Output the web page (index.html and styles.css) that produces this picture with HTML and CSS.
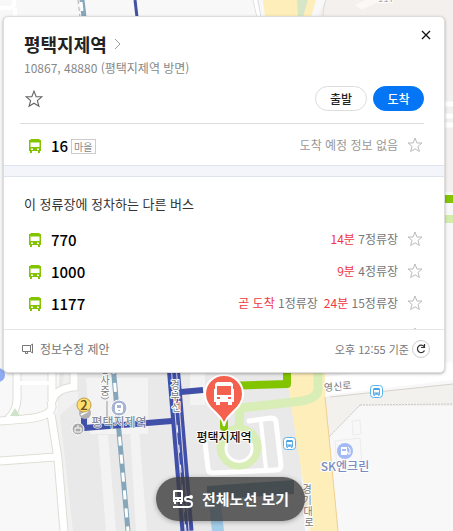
FILE: index.html
```html
<!DOCTYPE html>
<html lang="ko">
<head>
  <meta charset="UTF-8">
  <meta name="viewport" content="width=device-width, initial-scale=1.0">
  <title>평택지제역</title>
  <link rel="stylesheet" href="styles.css">
</head>
<body>
  <svg width="0" height="0" class="symbols" aria-hidden="true">
    <symbol id="star" viewBox="0 0 16 16">
      <path d="M8 1l1.900 5h5.100l-4 3.400 1.400 5.100L8 11.800l-4.400 2.700L5 9.400 1 6h5.100z" fill="none" stroke="currentColor" stroke-linejoin="miter"/>
    </symbol>
    <symbol id="bus" viewBox="0 0 12 14">
      <path fill="currentColor" fill-rule="evenodd" d="M2 0h8l1 1h1v11h-1v2H9v-2H3v2H1v-2H0V1h1zM1.500 3.500V8h9V3.500zM2 9.500V11h2V9.500zM8 9.500V11h2V9.500z"/>
    </symbol>
  </svg>

  <div class="map">
    <svg class="map-canvas" viewBox="0 0 453 531" preserveAspectRatio="xMidYMid slice">
      <rect width="453" height="531" fill="#f8f8f8"/>
      <!-- blocks -->
      <path d="M325 0h128v192h-13V17H318z" fill="#f3f0ed"/>
      <path d="M60 365h235l10 166H67L55 450z" fill="#e9e9e9"/>
      <path d="M66 365h14l-2 35-18 15 13 116h-8L53 430z" fill="#f1f1f1"/>
      <path d="M86 378h62v56H90zM98 435h10l8 96h-10zM130 430h9l8 101h-11zM190 365h15v40h-15z" fill="#f3f3f3"/>
      <path d="M325 397l128-13v22h-93l-31 31z" fill="#f2f1ee"/>
      <path d="M360 405l93-1M360 405l-31 32" fill="none" stroke="#c8c8c8" stroke-dasharray="2 1"/>
      <path d="M352 421l8-1 1 14-8 1zM335 441l25-3 2 28-25 2z" fill="#f8f8f8" stroke="#ececec"/>

      <!-- main road -->
      <path d="M291 365h34v32l4 40 9 94h-28l-7-50-15-95z" fill="#feeeba"/>
      <path d="M325 397l4 40 9 94" fill="none" stroke="#f0cf90"/>
      <path d="M263 0h53l-5 17h-46z" fill="#feeeba"/>
      <path d="M297 0h11l-5 17h-5z" fill="#d8e6c8"/>
      <path d="M326 0c-2 5-3 11-3 17M253 0l4 17M258 0l3 17" fill="none" stroke="#dcdcdc"/>
      <path d="M255 0l4 17" stroke="#fff" stroke-width="3"/>
      <path d="M355 5l18-9 12 2-23 12z" fill="#faf9f5"/>
      <text x="386" y="2" class="label-minor" text-anchor="middle">117</text>

      <!-- side roads -->
      <g fill="none">
        <path d="M0 421c30-2 50-3 52-14l-1-6M17 365v35q-1 12-9 19M52 365v35M0 461l55-4M51 414l7 45 6 72M52 402q2-13 22-15V365" stroke="#deded6" stroke-width="9"/>
        <path d="M0 421c30-2 50-3 52-14l-1-6M17 365v35q-1 12-9 19M52 365v35M0 461l55-4M51 414l7 45 6 72M52 402q2-13 22-15V365" stroke="#fff" stroke-width="7"/>
        <path d="M17 383h35M0 8h8q8 0 6-8M15 8v9" stroke="#fff" stroke-width="4"/>
        <path d="M326 386l127-15" stroke="#fff" stroke-width="18"/>
        <path d="M330 397l123-13" stroke="#d6d2ca"/>
        <path d="M443 104h10M443 116h10M443 125h10" stroke="#fff" stroke-width="5"/>
      </g>
      <path d="M15 408l5 8H10z" fill="#cfe3c8"/>

      <!-- station plaza -->
      <g fill="none" stroke-linejoin="round" stroke-linecap="round">
        <path d="M249 421l22-3q5 0 5 4l5 43q0 5-5 5l-63 3q-5 0-5-5l-4-33" stroke="#fff" stroke-width="5"/>
        <path d="M261 422l5 47" stroke="#fff" stroke-width="4"/>
        <path d="M239 428l1-20 62-7q16-3 16-12v-23" stroke="#d9edb7" stroke-width="9" stroke-linecap="butt"/>
        <circle cx="239" cy="447" r="18" stroke="#d9edb7" stroke-width="9"/>
        <path d="M230 439a13 13 0 1 0 18 0" stroke="#fff" stroke-width="3"/>
        <path d="M224 427v-41l63-2v-19" stroke="#82c400" stroke-width="8"/>
      </g>
      <path d="M207 486l87-6v14l-87 6z" fill="#6f93a4"/>
      <path d="M208 496h12l4 35h-12z" fill="#a2cce8"/>

      <!-- railway -->
      <g fill="none">
        <path d="M113 365l15 166" stroke="#86a6ba" stroke-width="5"/>
        <path d="M113 365l15 166" stroke="#fff" stroke-width="3" stroke-dasharray="9 9"/>
        <path d="M82 0l2 17" stroke="#86a6ba" stroke-width="5"/>
        <path d="M81 2l1 9" stroke="#fff" stroke-width="3"/>
        <path d="M78 0l2 17" stroke="#b0b0b0" stroke-dasharray="4 3"/>
        <path d="M135 0l2 17" stroke="#4252a5" stroke-width="3"/>
        <path d="M173 365l14 166" stroke="#4050a8" stroke-width="13"/>
        <path d="M171 365l14 166M176 365l13 166" stroke="#d8d8e4"/>
        <path d="M172 365l14 166" stroke="#fff" stroke-dasharray="8 12"/>
        <path d="M172 421l-88 7v-16M181 392l22-2" stroke="#4050a8" stroke-width="6"/>
      </g>
      <path d="M443 199h10" stroke="#82c400" stroke-width="8"/>
      <path d="M443 219h10" stroke="#d2edaa" stroke-width="8"/>

      <!-- pins and labels -->
      <circle cx="-2" cy="375" r="7" fill="#8daaf3"/>
      <circle cx="85" cy="413" r="6" fill="#b2b2b2"/>
      <path d="M81 415l7-4" stroke="#fff" stroke-width="2"/>
      <circle cx="78" cy="429" r="6" fill="#aaa" stroke="#fff"/>
      <path d="M75 428h6v4h-6zM78 425v3" fill="none" stroke="#fff"/>
      <circle cx="84" cy="405" r="7" fill="#ffdf6c" stroke="#bc9c52"/>
      <text x="84" y="410" class="label-exit" text-anchor="middle">2</text>
      <circle cx="119" cy="408" r="8" fill="#a8b5d2" stroke="#fff"/>
      <path fill="#fff" fill-rule="evenodd" d="M117 403h4l2 2v6l-1 2h-6l-1-2v-6zM117 405v3h4v-3zM118 410v1h2v-1z"/>
      <text x="119" y="427" class="label-station" text-anchor="middle">평택지제역</text>
      <g class="label-road" text-anchor="middle">
        <text x="105" y="373">공</text>
        <text x="105" y="384">사</text>
        <text x="105" y="395">중</text>
        <path d="M101 397q4 4 8 0M107 401v16" fill="none" stroke="#999"/>
        <text x="175" y="389">경</text>
        <text x="175" y="400">부</text>
        <text x="176" y="411">선</text>
        <text x="307" y="493">경</text>
        <text x="307" y="504">기</text>
        <text x="308" y="515">대</text>
        <text x="309" y="526">로</text>
        <text x="338" y="390" transform="rotate(-5 338 390)">영신로</text>
      </g>
      <g fill="#fff" stroke="#58b4ee">
        <rect x="370.500" y="385.500" width="12" height="12" rx="3"/>
        <rect x="283.500" y="437.500" width="12" height="12" rx="3"/>
      </g>
      <use href="#bus" x="373" y="388" width="7" height="8" color="#4ba4e4"/>
      <use href="#bus" x="286" y="440" width="7" height="8" color="#4ba4e4"/>
      <circle cx="345" cy="451" r="8" fill="#a3baf5"/>
      <path fill="#fff" fill-rule="evenodd" d="M341 447h6v8h-6zM342 449v2h4v-2z"/>
      <path d="M347 452h1v2h2v-5l-2-2" fill="none" stroke="#fff"/>
      <text x="345" y="471" class="label-place" text-anchor="middle">SK엔크린</text>

      <!-- selected stop -->
      <path d="M224 426c-1-6-4-9-9-14-6-5-10-11-10-18a19 19 0 0 1 38 0c0 7-4 13-10 18-5 5-8 8-9 14z" fill="#f4624f" stroke="#fff" stroke-width="2"/>
      <path fill="#fff" fill-rule="evenodd" d="M217 382h14l2 2v5h1v13h-2v3h-4v-3h-8v3h-4v-3h-2v-13h1v-5zM217 386v9h14v-9zM217 397v2h3v-2zM228 397v2h3v-2z"/>
      <text x="224" y="442" class="label-selected" text-anchor="middle">평택지제역</text>
    </svg>
  </div>

  <main class="card">
    <button class="close" aria-label="닫기">
      <svg width="10" height="10" viewBox="0 0 10 10"><path d="M1 1l8 8M9 1L1 9" fill="none" stroke="#111" stroke-width="1.300"/></svg>
    </button>

    <header class="stop">
      <h1><a href="#">평택지제역<svg width="7" height="12" viewBox="0 0 7 12"><path d="M1 1l5 5-5 5" fill="none" stroke="#999"/></svg></a></h1>
      <p class="stop-info">10867, 48880 (평택지제역 방면)</p>
      <div class="actions">
        <button class="fav fav-stop" aria-label="정류장 즐겨찾기"><svg width="18" height="18"><use href="#star"/></svg></button>
        <button class="pill">출발</button>
        <button class="pill pill-primary">도착</button>
      </div>
    </header>

    <ul class="buses buses-local">
      <li class="bus">
        <svg class="bus-icon" width="12" height="14"><use href="#bus"/></svg>
        <a href="#" class="bus-number">16</a>
        <span class="tag">마을</span>
        <span class="arrival none">도착 예정 정보 없음</span>
        <button class="fav" aria-label="16 즐겨찾기"><svg width="16" height="16"><use href="#star"/></svg></button>
      </li>
    </ul>

    <section class="others">
      <h2>이 정류장에 정차하는 다른 버스</h2>
      <ul class="buses buses-scroll">
        <li class="bus">
          <svg class="bus-icon" width="12" height="14"><use href="#bus"/></svg>
          <a href="#" class="bus-number">770</a>
          <span class="arrival"><em>14분</em> 7정류장</span>
          <button class="fav" aria-label="770 즐겨찾기"><svg width="16" height="16"><use href="#star"/></svg></button>
        </li>
        <li class="bus">
          <svg class="bus-icon" width="12" height="14"><use href="#bus"/></svg>
          <a href="#" class="bus-number">1000</a>
          <span class="arrival"><em>9분</em> 4정류장</span>
          <button class="fav" aria-label="1000 즐겨찾기"><svg width="16" height="16"><use href="#star"/></svg></button>
        </li>
        <li class="bus">
          <svg class="bus-icon" width="12" height="14"><use href="#bus"/></svg>
          <a href="#" class="bus-number">1177</a>
          <span class="arrival"><em>곧 도착</em> 1정류장</span>
          <span class="arrival arrival-next"><em>24분</em> 15정류장</span>
          <button class="fav" aria-label="1177 즐겨찾기"><svg width="16" height="16"><use href="#star"/></svg></button>
        </li>
        <li class="bus">
          <span class="arrival"></span>
          <button class="fav" aria-label="즐겨찾기"><svg width="16" height="16"><use href="#star"/></svg></button>
        </li>
      </ul>
    </section>

    <footer class="card-footer">
      <a href="#" class="suggest">
        <svg width="12" height="12" viewBox="0 0 12 12"><path d="M8.500 2.500h-8v6h8zM3.500 8.500v2h2v-2M8.500 2.500l2-1.500v9l-2-1.500" fill="none" stroke="#777"/></svg>
        정보수정 제안
      </a>
      <span class="time">오후 12:55 기준</span>
      <button class="refresh" aria-label="새로고침">
        <svg width="10" height="10" viewBox="0 0 10 10"><path d="M8.500 6.500A3.700 3.700 0 1 1 8 2.500M8.500 0v3.500H5" fill="none" stroke="#333" stroke-width="1.200"/></svg>
      </button>
    </footer>
  </main>

  <button class="all-routes">
    <svg width="22" height="20" viewBox="0 0 22 20">
      <path fill="#fff" fill-rule="evenodd" d="M2 1h8l1 1v11h-1v2H8v-2H4v2H2v-2H1V2zM3 3v5h6V3zM3 10v1h2v-1zM7 10v1h2v-1z"/>
      <path d="M1 18h15q4 0 4-3t-4-3q-3 0-3-2t3-2h3" fill="none" stroke="#fff" stroke-width="2"/>
      <circle cx="19" cy="8" r="2" fill="#fff"/>
    </svg>
    전체노선 보기
  </button>
</body>
</html>
```
FILE: styles.css
```css
* {
  box-sizing: border-box;
}

body {
  margin: 0;
  padding: 16px 8px 0 3px;
  min-height: 100vh;
  position: relative;
  overflow: hidden;
  font-family: "Noto Sans CJK KR", sans-serif;
  font-size: 12px;
  line-height: 20px;
  color: #222;
}

h1, h2, p, ul {
  margin: 0;
  padding: 0;
}

ul {
  list-style: none;
}

a {
  color: inherit;
  text-decoration: none;
}

em {
  font-style: normal;
  color: #f03742;
}

button {
  font: inherit;
  color: inherit;
  padding: 0;
  border: 0;
  background: none;
  cursor: pointer;
}

button svg {
  display: block;
}

.symbols {
  position: absolute;
}

/* map */
.map {
  position: absolute;
  inset: 0;
}

.map-canvas {
  display: block;
  width: 100%;
  height: 100%;
}

.map text {
  paint-order: stroke;
  stroke: #fff;
  stroke-width: 2px;
  stroke-linejoin: round;
}

.label-minor { font-size: 10px; fill: #aaa; }
.label-exit { font-size: 13px; font-weight: 500; fill: #665020; }
.map .label-exit { stroke: none; }
.map .label-station { font-size: 12px; font-weight: 500; fill: #858da0; stroke-width: 1px; }
.label-road { font-size: 10px; fill: #777; }
.label-place { font-size: 12px; font-weight: 500; fill: #7a8cc0; }
.label-selected { font-size: 12px; font-weight: 500; fill: #111; }

/* card */
.card {
  position: relative;
  background: #fff;
  border: 1px solid #ddd;
  border-radius: 5px;
  box-shadow: 0 1px 3px rgba(0, 0, 0, 0.3);
}

.close {
  position: absolute;
  top: 8px;
  right: 8px;
  padding: 5px;
}

.stop {
  margin: 0 20px 0 16px;
  padding: 14px 0 12px;
  border-bottom: 1px solid #ddd;
}

h1 {
  padding-left: 4px;
  font-size: 18px;
  line-height: 26px;
}

h1 a {
  display: inline-flex;
  align-items: center;
  gap: 7px;
}

.stop-info {
  padding-left: 4px;
  line-height: 22px;
  color: #888;
}

.actions {
  display: flex;
  align-items: center;
  gap: 6px;
  margin-top: 7px;
}

.fav {
  color: #bbb;
}

.fav-stop {
  margin: 0 auto 0 5px;
  color: #666;
}

.pill {
  width: 52px;
  height: 25px;
  border: 1px solid #ddd;
  border-radius: 13px;
  line-height: 23px;
  font-weight: 500;
}

.pill-primary {
  width: 51px;
  border-color: #0475f4;
  background: #0475f4;
  color: #fff;
}

.buses-local {
  padding: 6px 0 4px;
}

.bus {
  display: flex;
  align-items: center;
  height: 32px;
  padding: 0 21px 0 25px;
}

.bus-icon {
  margin-right: 10px;
  color: #82c400;
}

.bus-number {
  font-size: 15px;
  font-weight: 500;
  color: #000;
}

.tag {
  margin-left: 3px;
  padding: 0 2px;
  border: 1px solid #ccc;
  font-size: 10px;
  line-height: 13px;
  color: #888;
}

.arrival {
  margin-left: auto;
  padding-bottom: 2px;
  color: #777;
}

.arrival.none {
  color: #999;
}

.arrival-next {
  margin-left: 6px;
}

.bus .fav {
  margin-left: 9px;
  padding-bottom: 2px;
}

.others {
  border-top: 10px solid #f3f5fa;
  box-shadow: inset 0 1px #dfe3ed, 0 -1px #dfe3ed;
}

h2 {
  padding: 18px 20px 10px;
  font-size: 13px;
  font-weight: 400;
  line-height: 20px;
  color: #333;
}

.buses-scroll {
  max-height: 105px;
  overflow: hidden;
}

.card-footer {
  display: flex;
  align-items: center;
  height: 43px;
  padding: 0 14px 4px 18px;
  border-top: 1px solid #e5e5e5;
  color: #777;
}

.suggest {
  display: flex;
  align-items: center;
  gap: 6px;
  margin-right: auto;
}

.time {
  font-size: 11px;
}

.refresh {
  display: flex;
  align-items: center;
  justify-content: center;
  width: 18px;
  height: 18px;
  margin-left: 3px;
  border: 1px solid #ccc;
  border-radius: 50%;
}

.all-routes {
  position: absolute;
  left: 156px;
  bottom: 10px;
  display: flex;
  align-items: center;
  gap: 8px;
  height: 44px;
  padding: 0 16px;
  border-radius: 22px;
  background: rgba(60, 60, 60, 0.8);
  box-shadow: 0 1px 5px rgba(0, 0, 0, 0.3);
  font-size: 15px;
  font-weight: 700;
  color: #fff;
}
```
